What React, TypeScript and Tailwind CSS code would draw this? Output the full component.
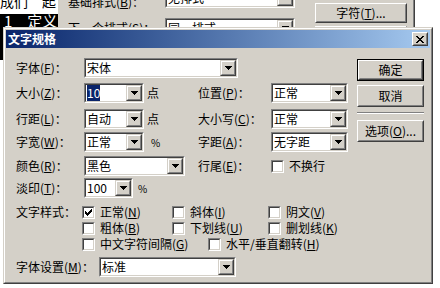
import React from "react";

const FONT = "font-['Noto_Sans_CJK_SC','Liberation_Sans',sans-serif]";

function Mn({ c }: { c: string }) {
  return (
    <span>
      (<span className="underline underline-offset-[1px]">{c}</span>)
    </span>
  );
}

function Sunken({ className, children, white = true }: { className: string; children?: React.ReactNode; white?: boolean }) {
  return (
    <div className={`shrink-0 border border-t-[#808080] border-l-[#808080] border-r-white border-b-white ${className}`}>
      <div
        className={`flex h-full w-full items-center border border-t-[#404040] border-l-[#404040] border-r-[#d4d0c8] border-b-[#d4d0c8] ${white ? "bg-white" : "bg-[#d4d0c8]"}`}
      >
        {children}
      </div>
    </div>
  );
}

function Arrow() {
  return (
    <svg width="7" height="4" viewBox="0 0 7 4" shapeRendering="crispEdges">
      <rect x="0" y="0" width="7" height="1" fill="#000" />
      <rect x="1" y="1" width="5" height="1" fill="#000" />
      <rect x="2" y="2" width="3" height="1" fill="#000" />
      <rect x="3" y="3" width="1" height="1" fill="#000" />
    </svg>
  );
}

function DropBtn() {
  return (
    <div className="h-[16px] w-[16px] shrink-0 border border-t-[#d4d0c8] border-l-[#d4d0c8] border-r-[#404040] border-b-[#404040] bg-[#d4d0c8]">
      <div className="flex h-full w-full items-center justify-center border border-t-white border-l-white border-r-[#808080] border-b-[#808080]">
        <Arrow />
      </div>
    </div>
  );
}

function Combo({ className, text, sel = false }: { className: string; text: string; sel?: boolean }) {
  return (
    <Sunken className={`h-[20px] ${className}`}>
      <div className="min-w-0 flex-1 overflow-hidden whitespace-nowrap pl-[1px] leading-[16px]">
        {sel ? <span className="bg-[#0a246a] text-white">{text}</span> : text}
      </div>
      <DropBtn />
    </Sunken>
  );
}

function Check({ on = false }: { on?: boolean }) {
  return (
    <Sunken className="h-[13px] w-[13px]">
      {on && (
        <svg width="9" height="9" viewBox="0 0 9 9" shapeRendering="crispEdges">
          <rect x="1" y="3" width="1" height="3" fill="#000" />
          <rect x="2" y="4" width="1" height="3" fill="#000" />
          <rect x="3" y="5" width="1" height="3" fill="#000" />
          <rect x="4" y="4" width="1" height="3" fill="#000" />
          <rect x="5" y="3" width="1" height="3" fill="#000" />
          <rect x="6" y="2" width="1" height="3" fill="#000" />
          <rect x="7" y="1" width="1" height="3" fill="#000" />
        </svg>
      )}
    </Sunken>
  );
}

function CheckItem({ on = false, children }: { on?: boolean; children: React.ReactNode }) {
  return (
    <div className="flex items-center">
      <Check on={on} />
      <span className="ml-[5px] whitespace-nowrap leading-[16px]">{children}</span>
    </div>
  );
}

function Button({ className, children, def = false }: { className: string; children: React.ReactNode; def?: boolean }) {
  const inner = (
    <div className="h-full w-full border border-t-white border-l-white border-r-[#404040] border-b-[#404040] bg-[#d4d0c8]">
      <div className="flex h-full w-full items-center justify-center border border-t-[#d4d0c8] border-l-[#d4d0c8] border-r-[#808080] border-b-[#808080] whitespace-nowrap">
        {children}
      </div>
    </div>
  );
  if (def) {
    return <div className={`shrink-0 border border-black ${className}`}>{inner}</div>;
  }
  return <div className={`shrink-0 ${className}`}>{inner}</div>;
}

function CloseGlyph() {
  const px: [number, number, number][] = [
    [0, 0, 2], [6, 0, 2],
    [1, 1, 2], [5, 1, 2],
    [2, 2, 4],
    [3, 3, 2],
    [2, 4, 4],
    [1, 5, 2], [5, 5, 2],
    [0, 6, 2], [6, 6, 2],
  ];
  return (
    <svg width="8" height="7" viewBox="0 0 8 7" shapeRendering="crispEdges">
      {px.map(([x, y, w], i) => (
        <rect key={i} x={x} y={y} width={w} height="1" fill="#000" />
      ))}
    </svg>
  );
}

function Label({ className, children }: { className: string; children: React.ReactNode }) {
  return <div className={`shrink-0 whitespace-nowrap leading-[16px] ${className}`}>{children}</div>;
}

export default function App() {
  return (
    <div className={`relative h-[288px] w-[440px] overflow-hidden bg-white text-[12px] text-black ${FONT}`}>
      {/* Background window */}
      <div className="flex h-[60px]">
        <div className="w-[58px] shrink-0 overflow-hidden">
          <div className="-mt-[10px] h-[24px] whitespace-nowrap text-[14px] leading-[22px]">成们　起</div>
          <div className="h-[46px] whitespace-nowrap bg-black pl-[4px] text-[15px] leading-[14px] text-white">1　定义</div>
        </div>
        <div className="flex w-[355px] shrink-0 bg-[#d4d0c8] pl-[10px]">
          <div className="flex w-[97px] shrink-0 flex-col">
            <Label className="-mt-[6px] h-[16px]">
              基础排式<Mn c="B" />：
            </Label>
            <Label className="mt-[10px] h-[16px]">
              下一个排式<Mn c="S" />：
            </Label>
          </div>
          <div className="flex w-[130px] shrink-0 flex-col">
            <Combo className="-mt-[12px] w-[130px]" text="无排式" />
            <Combo className="mt-[10px] w-[130px]" text="同一排式" />
          </div>
          <div className="ml-[20px] flex w-[92px] shrink-0 flex-col">
            <Button className="mt-[3px] h-[20px] w-[92px]">
              字符<Mn c="T" />...
            </Button>
            <Button className="mt-[3px] h-[20px] w-[92px]">格式</Button>
          </div>
        </div>
        <div className="w-[1px] shrink-0 bg-[#808080]" />
        <div className="w-[1px] shrink-0 bg-[#404040]" />
        <div className="flex-1 bg-white" />
      </div>

      {/* Dialog */}
      <div className="absolute left-[3px] top-[27px] h-[257px] w-[430px] border border-t-[#d4d0c8] border-l-[#d4d0c8] border-r-[#404040] border-b-[#404040] bg-[#d4d0c8]">
        <div className="flex h-full w-full flex-col border border-t-white border-l-white border-r-[#808080] border-b-[#808080] p-[1px]">
          {/* Title bar */}
          <div className="flex h-[18px] shrink-0 items-center bg-linear-to-r from-[#0a246a] to-[#a6caf0] pl-[2px] pr-[2px]">
            <span className="flex-1 font-bold leading-[16px] text-white">文字规格</span>
            <Button className="h-[14px] w-[16px]">
              <CloseGlyph />
            </Button>
          </div>

          {/* Body */}
          <div className="flex pl-[10px] pt-[10px]">
            <div className="flex w-[334px] shrink-0 flex-col">
              {/* R1 */}
              <div className="flex h-[20px] items-center">
                <Label className="w-[68px]">
                  字体<Mn c="F" />：
                </Label>
                <Combo className="w-[154px]" text="宋体" />
              </div>
              {/* R2 */}
              <div className="mt-[5px] flex h-[20px] items-center">
                <Label className="w-[68px]">
                  大小<Mn c="Z" />：
                </Label>
                <div className="flex w-[114px] shrink-0 items-center">
                  <Combo className="w-[60px]" text="10" sel />
                  <span className="ml-[3px]">点</span>
                </div>
                <Label className="w-[73px]">
                  位置<Mn c="P" />：
                </Label>
                <Combo className="w-[77px]" text="正常" />
              </div>
              {/* R3 */}
              <div className="mt-[6px] flex h-[20px] items-center">
                <Label className="w-[68px]">
                  行距<Mn c="L" />：
                </Label>
                <div className="flex w-[114px] shrink-0 items-center">
                  <Combo className="w-[60px]" text="自动" />
                  <span className="ml-[3px]">点</span>
                </div>
                <Label className="w-[73px]">
                  大小写<Mn c="C" />：
                </Label>
                <Combo className="w-[77px]" text="正常" />
              </div>
              {/* R4 */}
              <div className="mt-[3px] flex h-[20px] items-center">
                <Label className="w-[68px]">
                  字宽<Mn c="W" />：
                </Label>
                <div className="flex w-[114px] shrink-0 items-center">
                  <Combo className="w-[60px]" text="正常" />
                  <span className="ml-[7px] text-[10px]">%</span>
                </div>
                <Label className="w-[73px]">
                  字距<Mn c="A" />：
                </Label>
                <Combo className="w-[77px]" text="无字距" />
              </div>
              {/* R5 */}
              <div className="mt-[4px] flex h-[20px] items-center">
                <Label className="w-[68px]">
                  颜色<Mn c="R" />：
                </Label>
                <div className="flex w-[114px] shrink-0 items-center">
                  <Combo className="w-[101px]" text="黑色" />
                </div>
                <Label className="w-[73px]">
                  行尾<Mn c="E" />：
                </Label>
                <CheckItem>不换行</CheckItem>
              </div>
              {/* R6 */}
              <div className="mt-[2px] flex h-[20px] items-center">
                <Label className="w-[68px]">
                  淡印<Mn c="T" />：
                </Label>
                <Combo className="w-[49px]" text="100" />
                <span className="ml-[5px] text-[10px]">%</span>
              </div>
              {/* R7 */}
              <div className="mt-[6px] flex h-[16px] items-center">
                <Label className="w-[66px]">文字样式：</Label>
                <div className="w-[90px] shrink-0">
                  <CheckItem on>
                    正常<Mn c="N" />
                  </CheckItem>
                </div>
                <div className="w-[96px] shrink-0">
                  <CheckItem>
                    斜体<Mn c="I" />
                  </CheckItem>
                </div>
                <CheckItem>
                  阴文<Mn c="V" />
                </CheckItem>
              </div>
              {/* R8 */}
              <div className="flex h-[16px] items-center pl-[66px]">
                <div className="w-[90px] shrink-0">
                  <CheckItem>
                    粗体<Mn c="B" />
                  </CheckItem>
                </div>
                <div className="w-[96px] shrink-0">
                  <CheckItem>
                    下划线<Mn c="U" />
                  </CheckItem>
                </div>
                <CheckItem>
                  删划线<Mn c="K" />
                </CheckItem>
              </div>
              {/* R9 */}
              <div className="flex h-[16px] items-center pl-[66px]">
                <div className="w-[126px] shrink-0">
                  <CheckItem>
                    中文字符间隔<Mn c="G" />
                  </CheckItem>
                </div>
                <CheckItem>
                  水平/垂直翻转<Mn c="H" />
                </CheckItem>
              </div>
              {/* R10 */}
              <div className="mt-[5px] flex h-[20px] items-center">
                <Label className="w-[83px]">
                  字体设置<Mn c="M" />：
                </Label>
                <Combo className="w-[137px]" text="标准" />
              </div>
            </div>

            {/* Buttons */}
            <div className="ml-[7px] flex w-[67px] shrink-0 flex-col pt-[1px]">
              <Button def className="h-[22px] w-[67px]">
                确定
              </Button>
              <Button className="mt-[4px] h-[22px] w-[67px]">取消</Button>
              <div className="mt-[5px] h-[2px] border-t border-t-[#808080] border-b border-b-white" />
              <Button className="mt-[6px] h-[22px] w-[67px]">
                选项<Mn c="O" />...
              </Button>
            </div>
          </div>
        </div>
      </div>
    </div>
  );
}
